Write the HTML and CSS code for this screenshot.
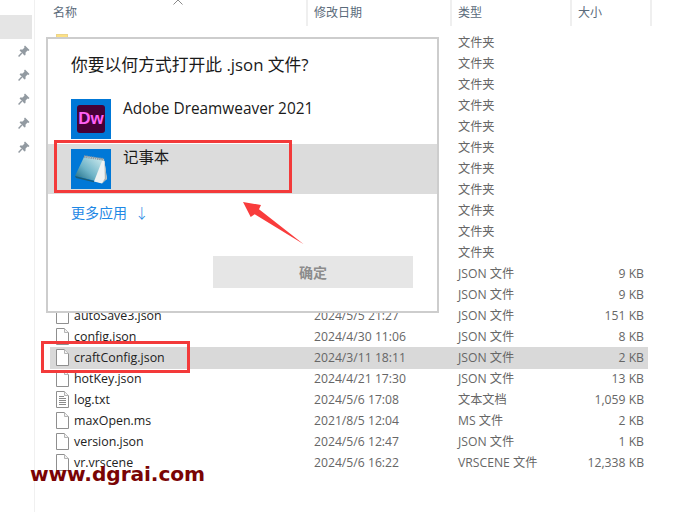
FILE: index.html
```html
<!DOCTYPE html>
<html lang="zh-CN">
<head>
<meta charset="utf-8">
<title>打开方式</title>
<link rel="stylesheet" href="styles.css">
</head>
<body>
<svg class="defs" width="0" height="0" aria-hidden="true">
  <defs>
    <symbol id="file" viewBox="0 0 13 17">
      <path d="M.5.5H8.5L12.5 4.5V16.5H.5Z" fill="#fff" stroke="#8f8f8f"/>
      <path d="M8.5.5V4.5H12.5" fill="#f2f2f2" stroke="#b5b5b5"/>
    </symbol>
    <symbol id="txt" viewBox="0 0 13 17">
      <path d="M.5.5H8.5L12.5 4.5V16.5H.5Z" fill="#fff" stroke="#8f8f8f"/>
      <path d="M8.5.5V4.5H12.5" fill="#f2f2f2" stroke="#b5b5b5"/>
      <path d="M3 5.5H8M3 7.5H10M3 9.5H10M3 11.5H10M3 13.5H10" stroke="#8a8a8a" fill="none"/>
    </symbol>
    <symbol id="pin" viewBox="0 0 12 12">
      <path d="M7 .5 11.500 5 10.400 6 9.500 5.600 7.600 7.500 7.500 10 6.500 10.600 1.600 5.600 2.200 4.600 4.600 4.500 6.500 2.600 6.100 1.600Z" fill="#929aa1"/>
      <path d="M3.800 8 .6 11.400" stroke="#929aa1" stroke-width="1.400" fill="none"/>
    </symbol>
    <linearGradient id="page" x1="0" y1="1" x2="1" y2="0">
      <stop offset="0" stop-color="#14627c"/>
      <stop offset=".45" stop-color="#6fb4c8"/>
      <stop offset="1" stop-color="#d4eef0"/>
    </linearGradient>
  </defs>
</svg>

<div class="explorer">
  <aside class="sidebar">
    <div class="side-selected"></div>
    <ul class="pins">
      <li><svg class="pin"><use href="#pin"/></svg></li>
      <li><svg class="pin"><use href="#pin"/></svg></li>
      <li><svg class="pin"><use href="#pin"/></svg></li>
      <li><svg class="pin"><use href="#pin"/></svg></li>
      <li><svg class="pin"><use href="#pin"/></svg></li>
    </ul>
  </aside>
  <main class="main">
    <header class="head">
      <div class="hcell hname">名称</div>
      <div class="hcell hdate">修改日期</div>
      <div class="hcell htype">类型</div>
      <div class="hcell hsize">大小</div>
    </header>
    <div class="list">
      <div class="row"><span class="name"><span class="folder"></span></span><span class="date"></span><span class="type">文件夹</span><span class="size"></span></div>
      <div class="row"><span class="name"></span><span class="date"></span><span class="type">文件夹</span><span class="size"></span></div>
      <div class="row"><span class="name"></span><span class="date"></span><span class="type">文件夹</span><span class="size"></span></div>
      <div class="row"><span class="name"></span><span class="date"></span><span class="type">文件夹</span><span class="size"></span></div>
      <div class="row"><span class="name"></span><span class="date"></span><span class="type">文件夹</span><span class="size"></span></div>
      <div class="row"><span class="name"></span><span class="date"></span><span class="type">文件夹</span><span class="size"></span></div>
      <div class="row"><span class="name"></span><span class="date"></span><span class="type">文件夹</span><span class="size"></span></div>
      <div class="row"><span class="name"></span><span class="date"></span><span class="type">文件夹</span><span class="size"></span></div>
      <div class="row"><span class="name"></span><span class="date"></span><span class="type">文件夹</span><span class="size"></span></div>
      <div class="row"><span class="name"></span><span class="date"></span><span class="type">文件夹</span><span class="size"></span></div>
      <div class="row"><span class="name"></span><span class="date"></span><span class="type">文件夹</span><span class="size"></span></div>
      <div class="row"><span class="name"></span><span class="date"></span><span class="type">JSON 文件</span><span class="size">9 KB</span></div>
      <div class="row"><span class="name"></span><span class="date"></span><span class="type">JSON 文件</span><span class="size">9 KB</span></div>
      <div class="row"><span class="name"><svg class="ficon"><use href="#file"/></svg>autoSave3.json</span><span class="date">2024/5/5 21:27</span><span class="type">JSON 文件</span><span class="size">151 KB</span></div>
      <div class="row"><span class="name"><svg class="ficon"><use href="#file"/></svg>config.json</span><span class="date">2024/4/30 11:06</span><span class="type">JSON 文件</span><span class="size">8 KB</span></div>
      <div class="row selected"><span class="name"><svg class="ficon"><use href="#file"/></svg>craftConfig.json</span><span class="date">2024/3/11 18:11</span><span class="type">JSON 文件</span><span class="size">2 KB</span></div>
      <div class="row"><span class="name"><svg class="ficon"><use href="#file"/></svg>hotKey.json</span><span class="date">2024/4/21 17:30</span><span class="type">JSON 文件</span><span class="size">13 KB</span></div>
      <div class="row"><span class="name"><svg class="ficon"><use href="#txt"/></svg>log.txt</span><span class="date">2024/5/6 17:08</span><span class="type">文本文档</span><span class="size">1,059 KB</span></div>
      <div class="row"><span class="name"><svg class="ficon"><use href="#file"/></svg>maxOpen.ms</span><span class="date">2021/8/5 12:04</span><span class="type">MS 文件</span><span class="size">2 KB</span></div>
      <div class="row"><span class="name"><svg class="ficon"><use href="#file"/></svg>version.json</span><span class="date">2024/5/6 12:47</span><span class="type">JSON 文件</span><span class="size">1 KB</span></div>
      <div class="row"><span class="name"><svg class="ficon"><use href="#file"/></svg>vr.vrscene</span><span class="date">2024/5/6 16:22</span><span class="type">VRSCENE 文件</span><span class="size">12,338 KB</span></div>
    </div>
  </main>
</div>

<svg class="chevron" width="12" height="5" viewBox="0 0 12 5" aria-hidden="true"><path d="M1.500 4.500 6 0 10.500 4.500" fill="none" stroke="#8a8a8a"/></svg>

<section class="dialog">
  <h1 class="dlg-title">你要以何方式打开此 .json 文件?</h1>
  <div class="app app-dw">
    <div class="app-icon"><span class="dw">Dw</span></div>
    <div class="app-name">Adobe Dreamweaver 2021</div>
  </div>
  <div class="app app-sel">
    <div class="app-icon">
      <svg width="40" height="40" viewBox="0 0 40 40" aria-hidden="true">
        <path d="M14 7 33 10 36 30 30 34 24 32Z" fill="#d5dbdb"/>
        <path d="M13 8 32 11 29 33 4 27Z" fill="url(#page)"/>
        <path d="M13 7.500 33 10.500" stroke="#8d9ba3" stroke-width="2.500" stroke-dasharray="1.500 .7" fill="none"/>
        <path d="M31 12 23 32.500 31 34.500 35.500 30 33.500 12Z" fill="#eef2f2"/>
        <path d="M33.500 12 35.800 30 31 34.500 33.800 29.500Z" fill="#a9b4b4"/>
        <path d="M4 27 23 32 23 33.300 5 29Z" fill="#1b5c75"/>
      </svg>
    </div>
    <div class="app-name app-name-cn">记事本</div>
  </div>
  <a class="more">更多应用 <span class="more-arrow">↓</span></a>
  <div class="actions"><button class="ok" type="button">确定</button></div>
</section>

<div class="mark mark-app"></div>
<div class="mark mark-file"></div>
<svg class="arrow" width="62" height="46" viewBox="0 0 62 46" aria-hidden="true">
  <path d="M0 1 18 4 16 8.300 60.700 43.300 11.700 13.300 7.700 16Z" fill="#f93c3c"/>
</svg>
<div class="watermark">www.dgrai.com</div>
</body>
</html>
```
FILE: styles.css
```css
* { box-sizing: border-box; }
html, body { margin: 0; padding: 0; }
body {
  width: 686px;
  height: 512px;
  overflow: hidden;
  background: #fff;
  position: relative;
  font-family: "Open Sans", "Noto Sans", "Noto Sans CJK SC", sans-serif;
  font-size: 12.2px;
  color: #666;
}
.defs { position: absolute; }

.explorer { display: flex; height: 512px; }
.sidebar {
  width: 35px;
  flex: none;
  border-right: 1px solid #f0f0f0;
  padding-top: 15px;
}
.side-selected { width: 32px; height: 24px; background: #e5e5e5; }
.pins {
  list-style: none;
  margin: 0;
  padding: 6px 0 0 18px;
  display: flex;
  flex-direction: column;
  gap: 12px;
}
.pins li { height: 12px; }
.pin { display: block; width: 12px; height: 12px; }

.main { flex: 1; min-width: 0; }
.head { display: flex; height: 26px; }
.hcell {
  color: #5a6a7a;
  font-size: 12px;
  line-height: 25px;
  border-right: 2px solid #efefef;
}
.hname { width: 273px; padding-left: 18px; }
.hdate { width: 144px; padding-left: 6px; }
.htype { width: 120px; padding-left: 6px; }
.hsize { width: 80px; padding-left: 6px; }

.list { padding: 6px 0 0 15px; }
.row {
  display: flex;
  align-items: center;
  width: 598px;
  height: 21px;
  line-height: 21px;
  white-space: nowrap;
}
.row.selected { background: #d9d9d9; box-shadow: 0 1px 0 #d9d9d9; }
.name {
  width: 264px;
  flex: none;
  display: flex;
  align-items: center;
  padding-left: 6px;
  color: #222;
  font-size: 12.400px;
}
.ficon { width: 13px; height: 17px; margin-right: 5px; flex: none; }
.folder {
  display: block;
  margin: 2px 0 7px;
  width: 12px;
  height: 12px;
  background: #fde184;
  border: 1px solid #ecd48a;
}
.date { width: 144px; flex: none; }
.type { width: 112px; flex: none; }
.size { width: 74px; flex: none; text-align: right; }

.chevron { position: absolute; left: 172px; top: 0; }

.dialog {
  position: absolute;
  left: 46px;
  top: 37px;
  width: 393px;
  height: 276px;
  background: #fff;
  border: 2px solid #cdcdcd;
  color: #1a1a1a;
}
.dlg-title {
  margin: 0;
  padding: 14px 0 0 23px;
  height: 60px;
  font-size: 16.800px;
  font-weight: 400;
  line-height: 24px;
}
.app { display: flex; gap: 12px; padding: 0 0 0 23px; height: 40px; }
.app-sel {
  height: 50px;
  margin-top: 5px;
  padding-top: 5px;
  background: #dcdcdc;
}
.app-icon {
  position: relative;
  width: 40px;
  height: 40px;
  flex: none;
  background: #0078d7;
}
.app-icon svg { display: block; }
.dw {
  position: absolute;
  left: 6px;
  top: 6px;
  width: 28px;
  height: 28px;
  border-radius: 3px;
  background: #470137;
  color: #ff61f6;
  font-family: "Liberation Sans", sans-serif;
  font-size: 17px;
  font-weight: 700;
  line-height: 27px;
  text-align: center;
}
.app-name { font-size: 15.400px; line-height: 19px; }
.app-name-cn { line-height: 18px; }
.more {
  display: block;
  margin: 8px 0 0 23px;
  color: #1e88e5;
  font-size: 14px;
  line-height: 22px;
}
.more-arrow { margin-left: 4px; font-weight: 300; }
.actions { padding: 32px 0 0 165px; }
.ok {
  display: block;
  width: 200px;
  height: 32px;
  border: 0;
  padding: 0;
  background: #e6e6e6;
  color: #8c8c8c;
  font-family: inherit;
  font-size: 14px;
  font-weight: 700;
}

.mark { position: absolute; border: 3px solid #f33a3a; }
.mark-app { left: 54px; top: 140px; width: 238px; height: 53px; }
.mark-file { left: 41px; top: 341px; width: 149px; height: 32px; }
.arrow { position: absolute; left: 243px; top: 201px; }
.watermark {
  position: absolute;
  left: 30px;
  top: 461px;
  color: #7a0404;
  font-family: "DejaVu Sans", sans-serif;
  font-size: 20.200px;
  font-weight: 700;
  line-height: 26px;
  letter-spacing: -0.1px;
}
```
